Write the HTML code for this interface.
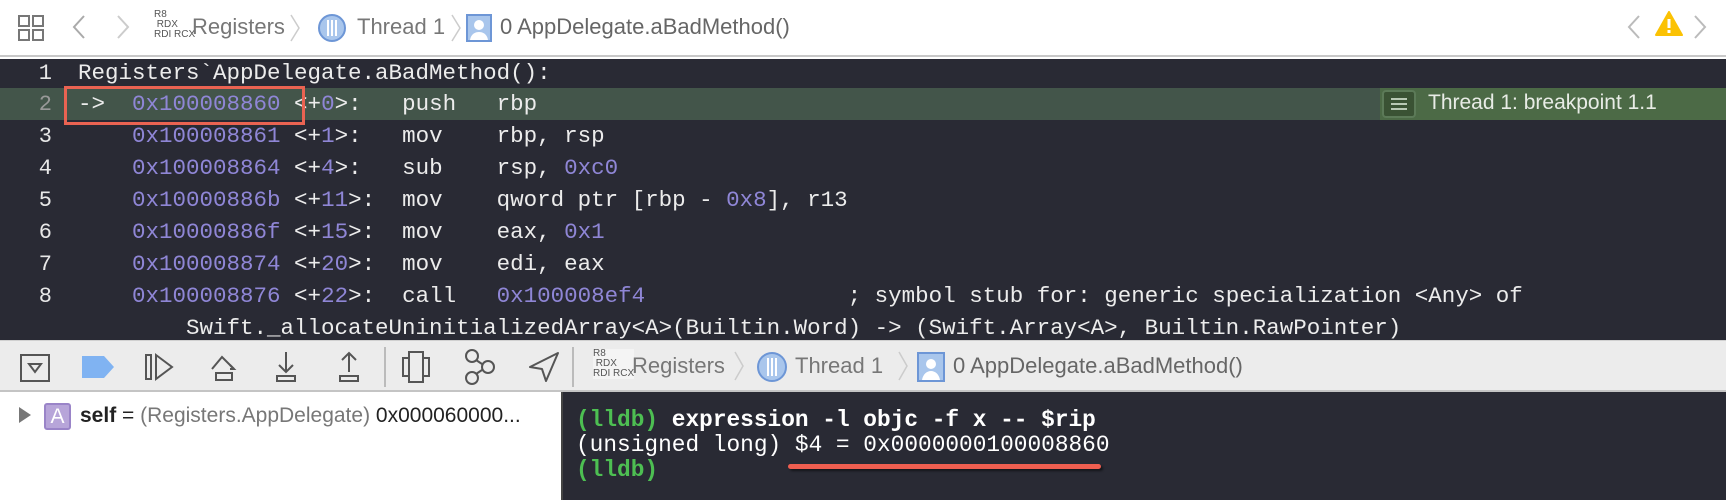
<!DOCTYPE html>
<html><head><meta charset="utf-8"><style>
*{margin:0;padding:0;box-sizing:border-box}
body{width:1726px;height:500px;overflow:hidden;background:#fff;font-family:"Liberation Sans",sans-serif;position:relative}
.abs{position:absolute;white-space:pre}
#top{position:absolute;left:0;top:0;width:1726px;height:57px;background:#fff;border-bottom:2px solid #c8c8c8}
#code{position:absolute;left:0;top:59px;width:1726px;height:281px;background:#292a34;overflow:hidden}
.ln{position:absolute;left:0;width:52px;text-align:right;font:22px "Liberation Mono",monospace;color:#e8e8e8}
.cl{position:absolute;left:78px;font:22.5px "Liberation Mono",monospace;color:#ececec;white-space:pre}
.p{color:#8f86d6}
#tb{position:absolute;left:0;top:340px;width:1726px;height:52px;background:#ececec;border-top:1px solid #d0d0d0;border-bottom:2px solid #c4c4c4}
#vars{position:absolute;left:0;top:392px;width:561px;height:108px;background:#fff}
#con{position:absolute;left:561px;top:392px;width:1165px;height:108px;background:#292a34;border-left:2px solid #444}
.c{position:absolute;left:13px;font:bold 22.8px "Liberation Mono",monospace;color:#fff;white-space:pre}
.g{color:#4dbf52}
.bc{font-size:22px;color:#777}
</style></head><body>
<div id="top">
 <svg class="abs" style="left:18px;top:15px" width="26" height="26" fill="none" stroke="#777" stroke-width="2"><rect x="1" y="1" width="10" height="10"/><rect x="15" y="1" width="10" height="10"/><rect x="1" y="15" width="10" height="10"/><rect x="15" y="15" width="10" height="10"/></svg>
 <svg class="abs" style="left:72px;top:14px" width="14" height="26" fill="none" stroke="#aaa" stroke-width="2"><path d="M12 2L2 13L12 24"/></svg>
 <svg class="abs" style="left:116px;top:14px" width="14" height="26" fill="none" stroke="#ccc" stroke-width="2"><path d="M2 2L12 13L2 24"/></svg>
 <div class="abs" style="left:154px;top:10px;font-size:10px;color:#555;line-height:10px">R8<br>&nbsp;RDX<br>RDI&nbsp;RCX</div>
 <div class="abs bc" style="left:192px;top:14px">Registers</div>
 <svg class="abs" style="left:289px;top:14px" width="12" height="28" fill="none" stroke="#ccc" stroke-width="1.5"><path d="M2 1L10 14L2 27"/></svg>
 <svg class="abs" style="left:318px;top:14px" width="28" height="28"><circle cx="14" cy="14" r="13" fill="#a9c6ec" stroke="#6d96d6" stroke-width="2"/><path d="M10 6v16M14 6v16M18 6v16" stroke="#fff" stroke-width="2"/></svg>
 <div class="abs bc" style="left:357px;top:14px">Thread 1</div>
 <svg class="abs" style="left:450px;top:14px" width="12" height="28" fill="none" stroke="#ccc" stroke-width="1.5"><path d="M2 1L10 14L2 27"/></svg>
 <svg class="abs" style="left:466px;top:14px" width="26" height="28"><rect x="1" y="1" width="24" height="26" fill="#a9c6ec" stroke="#6d96d6" stroke-width="2"/><circle cx="13" cy="11" r="5" fill="#fff"/><path d="M4 26c1-6 5-8 9-8s8 2 9 8z" fill="#fff"/></svg>
 <div class="abs bc" style="left:500px;top:14px;color:#666">0 AppDelegate.aBadMethod()</div>
 <svg class="abs" style="left:1627px;top:14px" width="14" height="26" fill="none" stroke="#bbb" stroke-width="2"><path d="M12 2L2 13L12 24"/></svg>
 <svg class="abs" style="left:1655px;top:11px" width="28" height="26"><path d="M14 1L27 24H1z" fill="#fbc204" stroke="#fbc204" stroke-linejoin="round" stroke-width="2"/><rect x="12.5" y="8" width="3" height="9" fill="#fff"/><rect x="12.5" y="19" width="3" height="3" fill="#fff"/></svg>
 <svg class="abs" style="left:1693px;top:14px" width="14" height="26" fill="none" stroke="#bbb" stroke-width="2"><path d="M2 2L12 13L2 24"/></svg>
</div>
<div id="code">
 <div class="abs" style="left:0;top:29px;width:1380px;height:32px;background:#43554a"></div>
 <div class="abs" style="left:1380px;top:29px;width:346px;height:32px;background:#4c6a46"></div>
 <div class="abs" style="left:1382px;top:31px;width:34px;height:28px;background:#3a5234;border:2px solid #5c7a58;border-radius:4px"></div>
 <svg class="abs" style="left:1390px;top:38px" width="18" height="14" stroke="#b8c8b4" stroke-width="2"><path d="M1 2h16M1 7h16M1 12h16"/></svg>
 <div class="abs" style="left:1428px;top:32px;font-size:21px;color:#e8ece6">Thread 1: breakpoint 1.1</div>
 <div class="ln" style="top:2px">1</div><div class="cl" style="top:1px">Registers`AppDelegate.aBadMethod():</div>
 <div class="ln" style="top:33px;color:#999">2</div><div class="cl" style="top:32px">->  <span class="p">0x100008860</span> &lt;+<span class="p">0</span>&gt;:   push   rbp</div>
 <div class="ln" style="top:65px">3</div><div class="cl" style="top:64px">    <span class="p">0x100008861</span> &lt;+<span class="p">1</span>&gt;:   mov    rbp, rsp</div>
 <div class="ln" style="top:97px">4</div><div class="cl" style="top:96px">    <span class="p">0x100008864</span> &lt;+<span class="p">4</span>&gt;:   sub    rsp, <span class="p">0xc0</span></div>
 <div class="ln" style="top:129px">5</div><div class="cl" style="top:128px">    <span class="p">0x10000886b</span> &lt;+<span class="p">11</span>&gt;:  mov    qword ptr [rbp - <span class="p">0x8</span>], r13</div>
 <div class="ln" style="top:161px">6</div><div class="cl" style="top:160px">    <span class="p">0x10000886f</span> &lt;+<span class="p">15</span>&gt;:  mov    eax, <span class="p">0x1</span></div>
 <div class="ln" style="top:193px">7</div><div class="cl" style="top:192px">    <span class="p">0x100008874</span> &lt;+<span class="p">20</span>&gt;:  mov    edi, eax</div>
 <div class="ln" style="top:225px">8</div><div class="cl" style="top:224px">    <span class="p">0x100008876</span> &lt;+<span class="p">22</span>&gt;:  call   <span class="p">0x100008ef4</span>               ; symbol stub for: generic specialization &lt;Any&gt; of</div>
 <div class="cl" style="top:256px">        Swift._allocateUninitializedArray&lt;A&gt;(Builtin.Word) -&gt; (Swift.Array&lt;A&gt;, Builtin.RawPointer)</div>
 <div class="abs" style="left:64px;top:27px;width:241px;height:39px;border:3px solid #ea6352"></div>
</div>
<div id="tb">
 <svg class="abs" style="left:20px;top:13px" width="30" height="28" fill="none" stroke="#555" stroke-width="2"><rect x="1" y="1" width="28" height="26"/><path d="M9 10h12l-6 8z"/></svg>
 <svg class="abs" style="left:82px;top:15px" width="32" height="22"><path d="M0 0h22l10 11-10 11H0z" fill="#80b3f2"/></svg>
 <svg class="abs" style="left:145px;top:12px" width="30" height="28" fill="none" stroke="#555" stroke-width="2"><rect x="1" y="2" width="5" height="24"/><path d="M11 2l16 12-16 12z"/></svg>
 <svg class="abs" style="left:210px;top:12px" width="30" height="30" fill="none" stroke="#555" stroke-width="2"><path d="M2 16L12 4l12 12"/><path d="M20 12l4 4-4 0"/><rect x="6" y="20" width="16" height="7"/></svg>
 <svg class="abs" style="left:274px;top:10px" width="24" height="32" fill="none" stroke="#555" stroke-width="2"><path d="M12 1v20M5 14l7 7 7-7"/><rect x="3" y="25" width="18" height="5"/></svg>
 <svg class="abs" style="left:337px;top:10px" width="24" height="32" fill="none" stroke="#555" stroke-width="2"><path d="M12 21V2M5 9l7-7 7 7"/><rect x="3" y="25" width="18" height="5"/></svg>
 <div class="abs" style="left:384px;top:6px;width:2px;height:40px;background:#bbb"></div>
 <svg class="abs" style="left:402px;top:10px" width="28" height="32" fill="none" stroke="#555" stroke-width="2"><rect x="7" y="1" width="14" height="30"/><path d="M7 7H1v18h6M21 7h6v18h-6"/></svg>
 <svg class="abs" style="left:464px;top:8px" width="32" height="36" fill="none" stroke="#555" stroke-width="2"><circle cx="8" cy="7" r="6"/><circle cx="24" cy="18" r="6"/><circle cx="8" cy="29" r="6"/><path d="M12 11l6 4M12 25l6-4"/></svg>
 <svg class="abs" style="left:528px;top:10px" width="32" height="32" fill="none" stroke="#555" stroke-width="2" stroke-linejoin="round"><path d="M30 2L2 16l12 2 4 12z"/></svg>
 <div class="abs" style="left:572px;top:6px;width:2px;height:40px;background:#bbb"></div>
 <div class="abs" style="left:593px;top:8px;font-size:10px;color:#555;line-height:10px;background:#f4f4f4">R8<br>&nbsp;RDX<br>RDI&nbsp;RCX</div>
 <div class="abs bc" style="left:632px;top:12px">Registers</div>
 <svg class="abs" style="left:733px;top:10px" width="12" height="30" fill="none" stroke="#ccc" stroke-width="1.5"><path d="M2 1L10 15L2 29"/></svg>
 <svg class="abs" style="left:757px;top:11px" width="30" height="30"><circle cx="15" cy="15" r="14" fill="#a9c6ec" stroke="#6d96d6" stroke-width="2"/><path d="M11 6v18M15 6v18M19 6v18" stroke="#fff" stroke-width="2"/></svg>
 <div class="abs bc" style="left:795px;top:12px">Thread 1</div>
 <svg class="abs" style="left:897px;top:10px" width="12" height="30" fill="none" stroke="#ccc" stroke-width="1.5"><path d="M2 1L10 15L2 29"/></svg>
 <svg class="abs" style="left:917px;top:11px" width="28" height="30"><rect x="1" y="1" width="26" height="28" fill="#a9c6ec" stroke="#6d96d6" stroke-width="2"/><circle cx="14" cy="12" r="5" fill="#fff"/><path d="M5 28c1-6 5-9 9-9s8 3 9 9z" fill="#fff"/></svg>
 <div class="abs bc" style="left:953px;top:12px;color:#666">0 AppDelegate.aBadMethod()</div>
</div>
<div id="vars">
 <svg class="abs" style="left:18px;top:14px" width="14" height="18"><path d="M1 1l12 8-12 8z" fill="#777"/></svg>
 <div class="abs" style="left:44px;top:11px;width:27px;height:27px;background:#b7a5d9;border:2px solid #9a84c8;border-radius:3px;color:#fff;font-size:21px;text-align:center;line-height:23px">A</div>
 <div class="abs" style="left:80px;top:12px;font-size:21px;color:#222"><b>self</b> = <span style="color:#777">(Registers.AppDelegate)</span> 0x000060000...</div>
</div>
<div id="con">
 <div class="c" style="top:15px"><span class="g">(lldb)</span> expression -l objc -f x -- $rip</div>
 <div class="c" style="top:40px;font-weight:normal">(unsigned long) $4 = 0x0000000100008860</div>
 <div class="c" style="top:65px"><span class="g">(lldb)</span></div>
 <div class="abs" style="left:225px;top:72px;width:313px;height:5px;background:#ef5e50;border-radius:3px;box-shadow:2px 2px 2px rgba(0,0,0,.5)"></div>
</div>
</body></html>
